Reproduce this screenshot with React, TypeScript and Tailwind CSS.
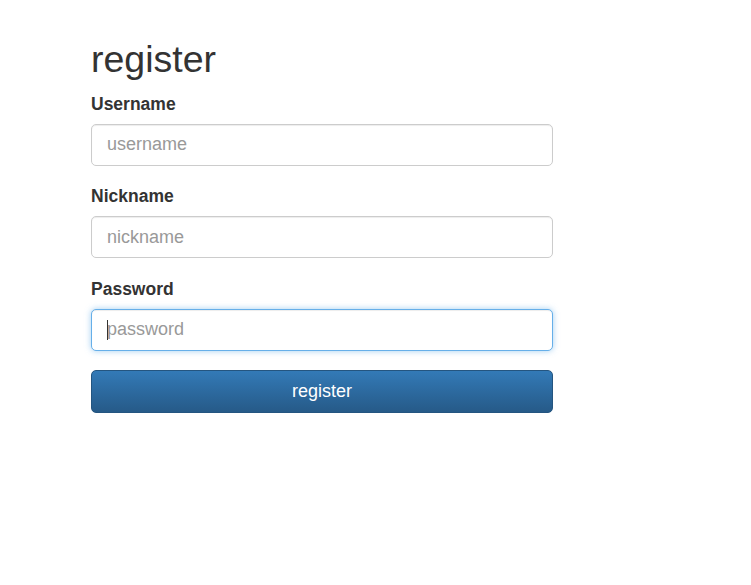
export default function App() {
  return (
    <div className="min-h-[585px] bg-white font-['Liberation_Sans',Arial,sans-serif] text-[#333]">
      <div className="w-[462px] ml-[91px] pt-[38.5px]">
        <h1 className="text-[37.5px] leading-[40px] font-normal">register</h1>
        <form className="mt-[13px] flex flex-col">
          <div>
            <label className="block text-[17.5px] leading-[24px] font-bold">Username</label>
            <input
              type="text"
              placeholder="username"
              className="mt-[8px] block w-full h-[42px] rounded-[5px] border border-[#ccc] bg-white px-[15px] text-[18px] text-[#555] placeholder:text-[#999] shadow-[inset_0_1px_1px_rgba(0,0,0,0.075)] outline-none"
            />
          </div>
          <div className="mt-[18.5px]">
            <label className="block text-[17.5px] leading-[24px] font-bold">Nickname</label>
            <input
              type="text"
              placeholder="nickname"
              className="mt-[8px] block w-full h-[42px] rounded-[5px] border border-[#ccc] bg-white px-[15px] text-[18px] text-[#555] placeholder:text-[#999] shadow-[inset_0_1px_1px_rgba(0,0,0,0.075)] outline-none"
            />
          </div>
          <div className="mt-[18.5px]">
            <label className="block text-[17.5px] leading-[24px] font-bold">Password</label>
            <div className="relative mt-[8px]">
              <input
                type="password"
                placeholder="password"
                className="block w-full h-[42px] rounded-[5px] border border-[#66afe9] bg-white px-[15px] text-[18px] text-[#555] placeholder:text-[#999] shadow-[inset_0_1px_1px_rgba(0,0,0,0.075),0_0_6px_rgba(102,175,233,0.6)] outline-none"
              />
              {/* text caret */}
              <span className="absolute left-[16px] top-[11px] h-[20px] w-px bg-[#333]" />
            </div>
          </div>
          <button
            type="button"
            className="mt-[19px] h-[43px] w-full rounded-[5px] border border-[#245580] bg-gradient-to-b from-[#337ab7] to-[#265a88] text-[18px] text-white"
          >
            register
          </button>
        </form>
      </div>
    </div>
  );
}
